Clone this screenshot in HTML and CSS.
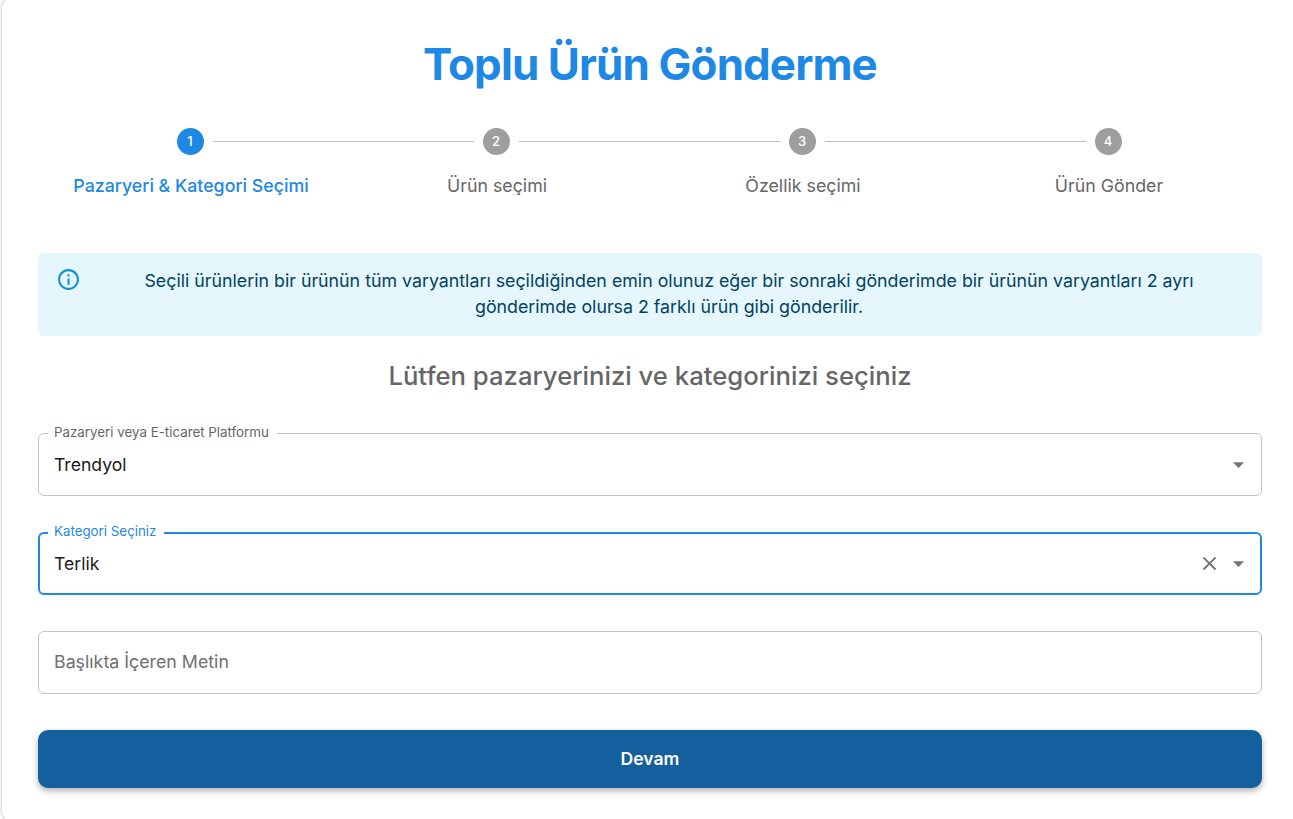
FILE: index.html
```html
<!DOCTYPE html>
<html lang="tr">
<head>
    <meta charset="UTF-8">
    <meta name="viewport" content="width=device-width, initial-scale=1.0">
    <title>Toplu Ürün Gönderme</title>
    <link rel="stylesheet" href="styles.css">
</head>
<body>
    <div class="card">
        <h1 class="page-title">Toplu Ürün Gönderme</h1>

        <div class="stepper">
            <div class="step step-active">
                <div class="step-head">
                    <span class="step-line step-line-hidden"></span>
                    <span class="step-num">1</span>
                    <span class="step-line"></span>
                </div>
                <div class="step-label">Pazaryeri &amp; Kategori Seçimi</div>
            </div>
            <div class="step">
                <div class="step-head">
                    <span class="step-line"></span>
                    <span class="step-num">2</span>
                    <span class="step-line"></span>
                </div>
                <div class="step-label">Ürün seçimi</div>
            </div>
            <div class="step">
                <div class="step-head">
                    <span class="step-line"></span>
                    <span class="step-num">3</span>
                    <span class="step-line"></span>
                </div>
                <div class="step-label">Özellik seçimi</div>
            </div>
            <div class="step">
                <div class="step-head">
                    <span class="step-line"></span>
                    <span class="step-num">4</span>
                    <span class="step-line step-line-hidden"></span>
                </div>
                <div class="step-label">Ürün Gönder</div>
            </div>
        </div>

        <div class="alert">
            <svg class="alert-icon" viewBox="0 0 24 24" width="25" height="25">
                <path fill="currentColor" d="M11 7h2v2h-2zm0 4h2v6h-2zm1-9C6.48 2 2 6.48 2 12s4.48 10 10 10 10-4.48 10-10S17.52 2 12 2zm0 18c-4.41 0-8-3.59-8-8s3.59-8 8-8 8 3.59 8 8-3.59 8-8 8z"/>
            </svg>
            <p class="alert-text">Seçili ürünlerin bir ürünün tüm varyantları seçildiğinden emin olunuz eğer bir sonraki gönderimde bir ürünün varyantları 2 ayrı gönderimde olursa 2 farklı ürün gibi gönderilir.</p>
        </div>

        <h2 class="form-title">Lütfen pazaryerinizi ve kategorinizi seçiniz</h2>

        <div class="field">
            <span class="field-label">Pazaryeri veya E-ticaret Platformu</span>
            <span class="field-value">Trendyol</span>
            <svg class="field-arrow" viewBox="0 0 24 24" width="27" height="27"><path fill="currentColor" d="M7 10l5 5 5-5z"/></svg>
        </div>

        <div class="field field-focus">
            <span class="field-label">Kategori Seçiniz</span>
            <span class="field-value">Terlik</span>
            <svg class="field-clear" viewBox="0 0 24 24" width="23" height="23"><path fill="currentColor" d="M19 6.41 17.59 5 12 10.59 6.41 5 5 6.41 10.59 12 5 17.59 6.41 19 12 13.41 17.59 19 19 17.59 13.41 12z"/></svg>
            <svg class="field-arrow" viewBox="0 0 24 24" width="27" height="27"><path fill="currentColor" d="M7 10l5 5 5-5z"/></svg>
        </div>

        <div class="field">
            <span class="field-placeholder">Başlıkta İçeren Metin</span>
        </div>

        <button class="submit-btn" type="button">Devam</button>
    </div>
</body>
</html>
```

FILE: styles.css
```css
html, body {
    height: 100%;
}

body {
    margin: 0;
    padding-left: 2px;
    background: #fff;
    color: #1a1a1a;
    font-family: 'Inter', sans-serif;
    overflow: hidden;
}

.card {
    width: 1296px;
    height: 825px;
    margin-top: -3px;
    box-sizing: border-box;
    padding: 35px 36px 0;
    background: #fff;
    border-radius: 12px;
    box-shadow: 0 0 3px 1px rgba(0, 0, 0, 0.18);
}

.page-title {
    margin: 0 0 32px;
    width: 1224px;
    font-size: 43.9px;
    line-height: 64px;
    font-weight: 700;
    letter-spacing: -0.02em;
    text-align: center;
    color: #1e88e5;
}

.stepper {
    display: flex;
    width: 1224px;
    margin: 0 0 54px -1px;
}

.step {
    flex: 1;
    display: flex;
    flex-direction: column;
    align-items: center;
}

.step-head {
    display: flex;
    align-items: center;
    align-self: stretch;
    height: 27px;
}

.step-num {
    width: 27px;
    height: 27px;
    flex-shrink: 0;
    margin: 0 9px;
    border-radius: 50%;
    background: #9e9e9e;
    color: #fff;
    font-size: 13px;
    font-weight: 500;
    line-height: 27px;
    text-align: center;
}

.step-active .step-num {
    background: #1e88e5;
}

.step-line {
    flex: 1;
    height: 1px;
    background: #bdbdbd;
}

.step-line-hidden {
    background: transparent;
}

.step-label {
    margin-top: 18px;
    padding-left: 2px;
    font-size: 17.8px;
    line-height: 26px;
    color: #666;
}

.step-active .step-label {
    color: #1e88e5;
    font-weight: 500;
}

.alert {
    display: flex;
    width: 1224px;
    height: 83px;
    box-sizing: border-box;
    padding: 14px 25px 14px 18px;
    margin-bottom: 19px;
    background: #e5f6fd;
    border-radius: 6px;
    color: #014361;
}

.alert-icon {
    flex-shrink: 0;
    color: #0f8fd6;
}

.alert-text {
    flex: 1;
    margin: 1px 0 0 20px;
    font-size: 17.8px;
    line-height: 26.4px;
    text-align: center;
}

.form-title {
    width: 1224px;
    margin: 0 0 37px;
    font-size: 25.7px;
    line-height: 41px;
    font-weight: 500;
    text-align: center;
    color: #666;
}

.field {
    position: relative;
    display: flex;
    align-items: center;
    gap: 4px;
    width: 1224px;
    height: 63px;
    box-sizing: border-box;
    padding: 0 9px 0 15px;
    margin-bottom: 36px;
    border: 1px solid #c4c4c4;
    border-radius: 6px;
}

.field-focus {
    border: 2px solid #1e88e5;
    padding: 0 8px 0 14px;
}

.field-label {
    position: absolute;
    top: -10px;
    left: 9px;
    padding: 0 8px 0 6px;
    background: #fff;
    font-size: 13.33px;
    line-height: 16px;
    color: #666;
}

.field-focus .field-label {
    left: 8px;
    top: -11px;
    color: #1e88e5;
}

.field-value {
    flex: 1;
    font-size: 17.6px;
    color: #1a1a1a;
}

.field-placeholder {
    flex: 1;
    padding-bottom: 2px;
    font-size: 17.8px;
    color: #6f6f6f;
}

.field-arrow {
    color: #757575;
    flex-shrink: 0;
}

.field-clear {
    color: #757575;
    flex-shrink: 0;
}

.submit-btn {
    display: block;
    width: 1224px;
    height: 58px;
    padding: 0 0 2px;
    border: none;
    border-radius: 10px;
    background: #14609f;
    color: #fff;
    font-family: inherit;
    font-size: 17.6px;
    font-weight: 600;
    box-shadow: 0 3px 6px rgba(0, 0, 0, 0.3);
}
```
